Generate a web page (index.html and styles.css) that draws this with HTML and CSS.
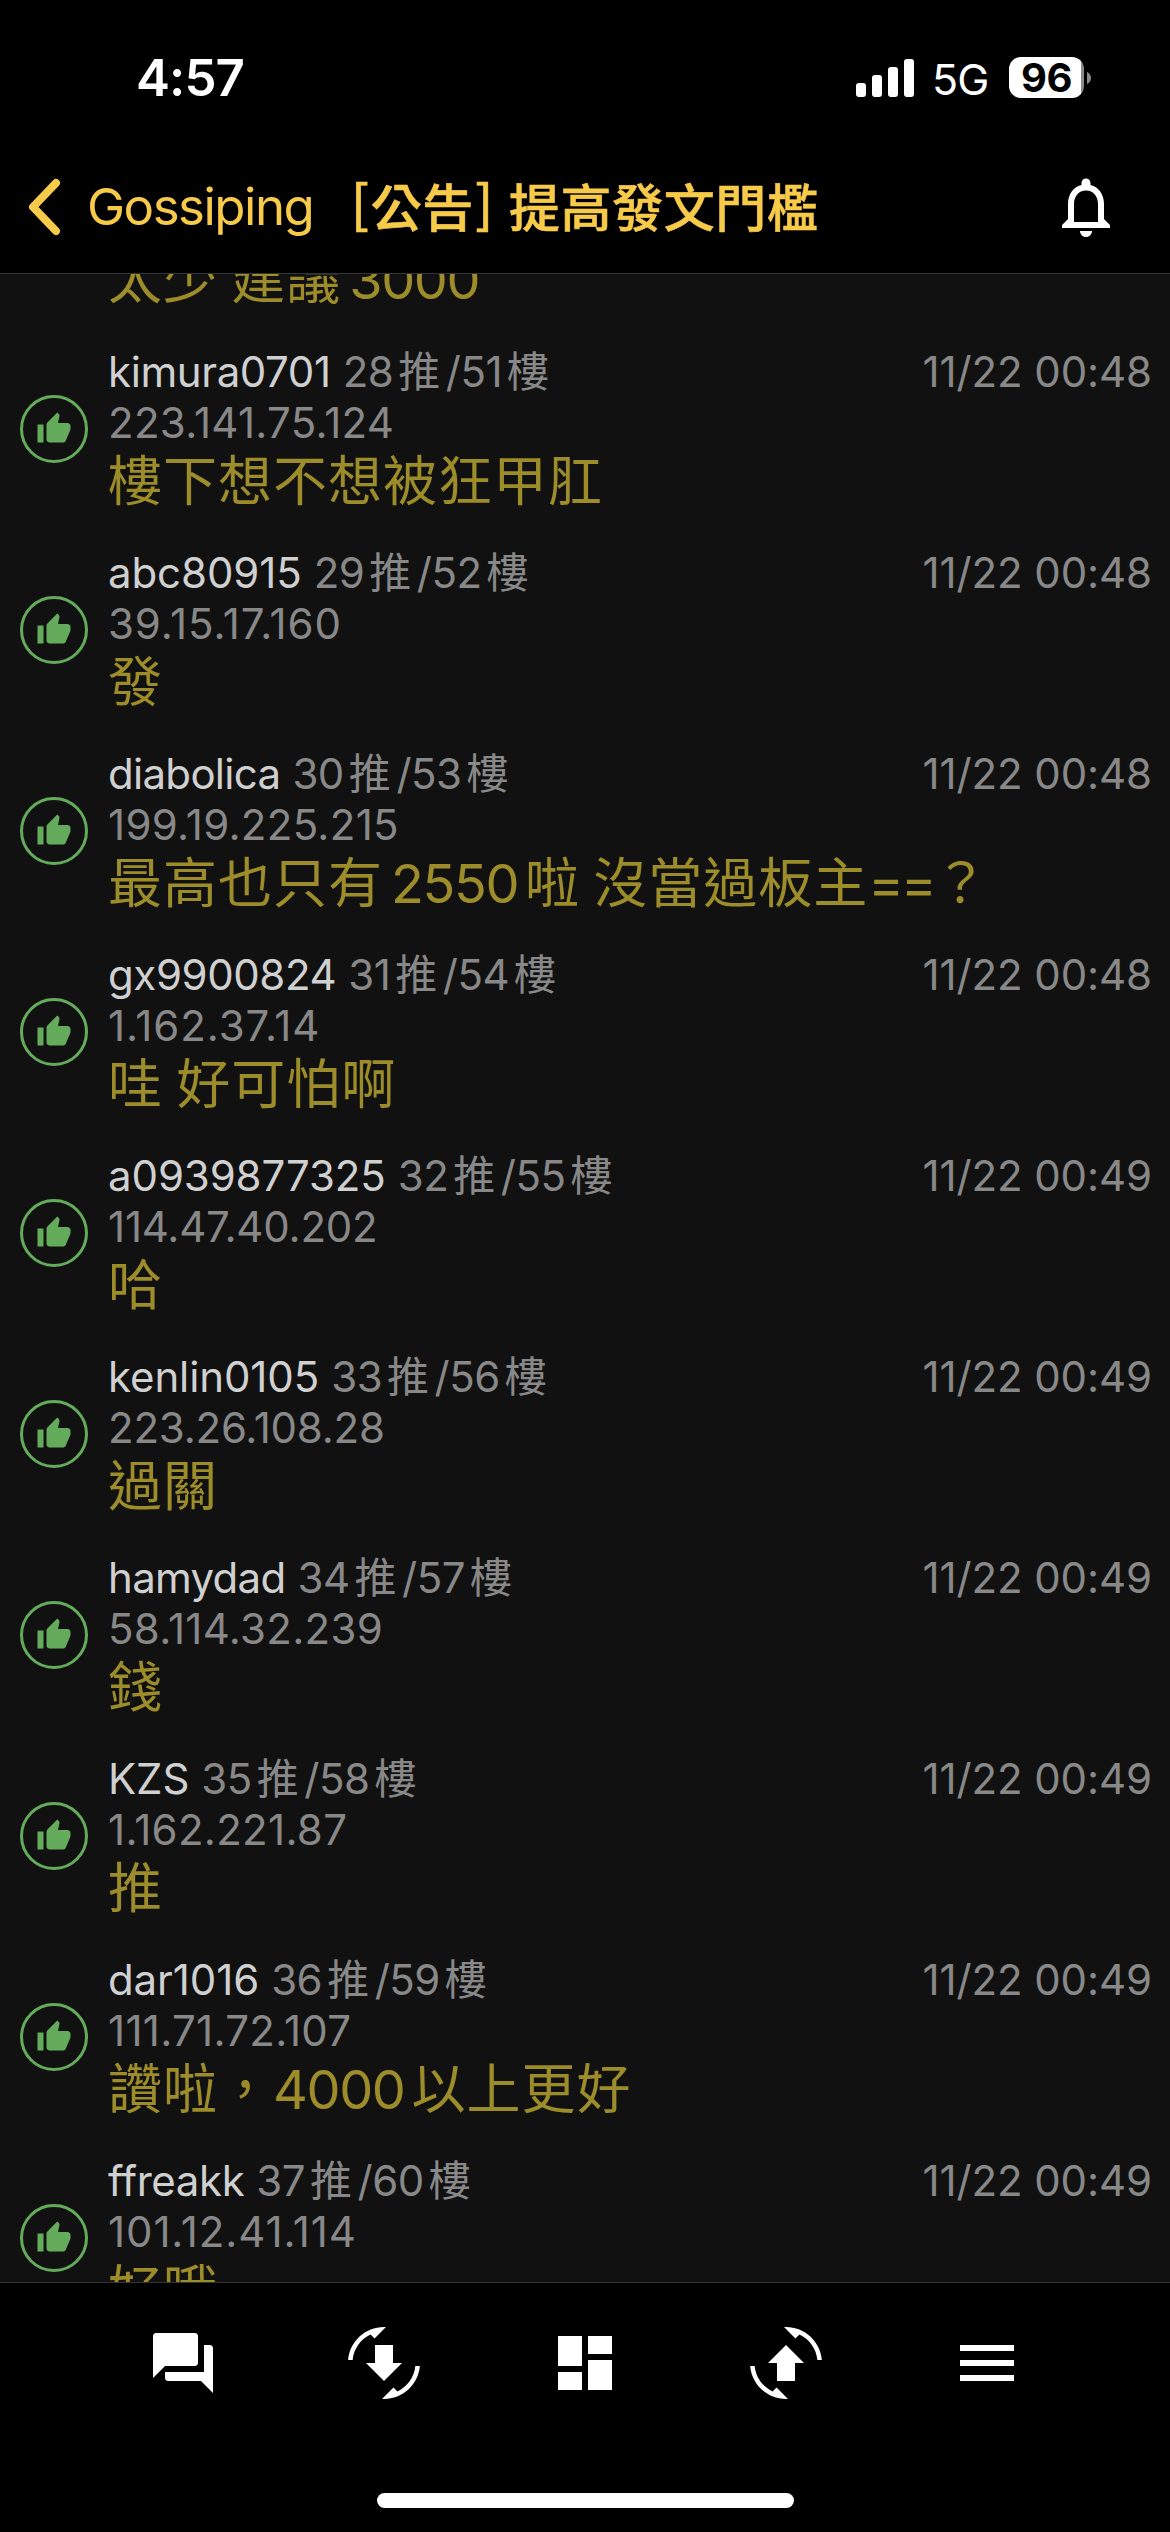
FILE: index.html
```html
<!DOCTYPE html>
<html lang="zh-Hant">
<head>
<meta charset="utf-8">
<title>[公告] 提高發文門檻</title>
<link rel="stylesheet" href="styles.css">
</head>
<body>
<svg class="defs" aria-hidden="true">
  <symbol id="thumb" viewBox="0 0 24 24"><path d="M1 21h4V9H1v12zm22-11c0-1.1-.9-2-2-2h-6.31l.95-4.57.03-.32c0-.41-.17-.79-.44-1.06L14.17 1 7.59 7.59C7.22 7.95 7 8.45 7 9v10c0 1.1.9 2 2 2h9c.83 0 1.54-.5 1.84-1.22l3.02-7.05c.09-.23.14-.47.14-.73v-2z"/></symbol>
</svg>
<div class="screen">
  <header class="top">
    <div class="status">
      <span class="clock">4:57</span>
      <div class="indicators">
        <svg class="signal" viewBox="0 0 58 40"><rect x="0" y="26" width="10" height="14" rx="3"/><rect x="16" y="18" width="10" height="22" rx="3"/><rect x="32" y="10" width="10" height="30" rx="3"/><rect x="48" y="2" width="10" height="38" rx="3"/></svg>
        <span class="network">5G</span>
        <div class="battery">96</div>
        <svg class="battery-cap" viewBox="0 0 4 12"><path d="M0 0c2.500 1 4 3.500 4 6s-1.500 5-4 6z"/></svg>
      </div>
    </div>
    <nav class="nav">
      <svg class="chevron" viewBox="0 0 40 64"><path d="M33 8 10 32l23 24"/></svg>
      <span class="back">Gossiping</span>
      <h1 class="title"><span class="bracket">[</span>公告<span class="bracket">]</span> 提高發文門檻</h1>
      <svg class="bell" viewBox="0 0 24 24"><path d="M12 22c1.100 0 2-.9 2-2h-4c0 1.100.890 2 2 2zm6-6v-5c0-3.070-1.640-5.640-4.500-6.320V4c0-.83-.67-1.500-1.500-1.500s-1.500.670-1.500 1.500v.68C7.630 5.360 6 7.920 6 11v5l-2 2v1h16v-1l-2-2zm-2 1H8v-6c0-2.480 1.510-4.500 4-4.500s4 2.020 4 4.500v6z"/></svg>
    </nav>
  </header>

  <main class="list">
    <article class="row partial">
      <p class="text">太少 建議<span class="num last">3000</span></p>
    </article>
    <article class="row">
      <div class="badge"><svg><use href="#thumb"/></svg></div>
      <div class="body">
        <div class="head"><span class="user">kimura0701</span><span class="floor">28<i>推</i>/51<i>樓</i></span><time>11/22 00:48</time></div>
        <div class="ip">223.141.75.124</div>
        <p class="text">樓下想不想被狂甲肛</p>
      </div>
    </article>
    <article class="row">
      <div class="badge"><svg><use href="#thumb"/></svg></div>
      <div class="body">
        <div class="head"><span class="user digits">abc80915</span><span class="floor">29<i>推</i>/52<i>樓</i></span><time>11/22 00:48</time></div>
        <div class="ip loose">39.15.17.160</div>
        <p class="text">發</p>
      </div>
    </article>
    <article class="row">
      <div class="badge"><svg><use href="#thumb"/></svg></div>
      <div class="body">
        <div class="head"><span class="user letters">diabolica</span><span class="floor">30<i>推</i>/53<i>樓</i></span><time>11/22 00:48</time></div>
        <div class="ip">199.19.225.215</div>
        <p class="text">最高也只有<span class="num">2550</span>啦 沒當過板主<span class="sign">==</span>？</p>
      </div>
    </article>
    <article class="row">
      <div class="badge"><svg><use href="#thumb"/></svg></div>
      <div class="body">
        <div class="head"><span class="user">gx9900824</span><span class="floor">31<i>推</i>/54<i>樓</i></span><time>11/22 00:48</time></div>
        <div class="ip loose">1.162.37.14</div>
        <p class="text">哇 好可怕啊</p>
      </div>
    </article>
    <article class="row">
      <div class="badge"><svg><use href="#thumb"/></svg></div>
      <div class="body">
        <div class="head"><span class="user digits">a0939877325</span><span class="floor">32<i>推</i>/55<i>樓</i></span><time>11/22 00:49</time></div>
        <div class="ip tight">114.47.40.202</div>
        <p class="text">哈</p>
      </div>
    </article>
    <article class="row">
      <div class="badge"><svg><use href="#thumb"/></svg></div>
      <div class="body">
        <div class="head"><span class="user digits">kenlin0105</span><span class="floor">33<i>推</i>/56<i>樓</i></span><time>11/22 00:49</time></div>
        <div class="ip tight">223.26.108.28</div>
        <p class="text">過關</p>
      </div>
    </article>
    <article class="row">
      <div class="badge"><svg><use href="#thumb"/></svg></div>
      <div class="body">
        <div class="head"><span class="user letters">hamydad</span><span class="floor">34<i>推</i>/57<i>樓</i></span><time>11/22 00:49</time></div>
        <div class="ip">58.114.32.239</div>
        <p class="text">錢</p>
      </div>
    </article>
    <article class="row">
      <div class="badge"><svg><use href="#thumb"/></svg></div>
      <div class="body">
        <div class="head"><span class="user digits">KZS</span><span class="floor">35<i>推</i>/58<i>樓</i></span><time>11/22 00:49</time></div>
        <div class="ip">1.162.221.87</div>
        <p class="text">推</p>
      </div>
    </article>
    <article class="row">
      <div class="badge"><svg><use href="#thumb"/></svg></div>
      <div class="body">
        <div class="head"><span class="user digits">dar1016</span><span class="floor">36<i>推</i>/59<i>樓</i></span><time>11/22 00:49</time></div>
        <div class="ip">111.71.72.107</div>
        <p class="text">讚啦，<span class="num after-comma">4000</span>以上更好</p>
      </div>
    </article>
    <article class="row">
      <div class="badge"><svg><use href="#thumb"/></svg></div>
      <div class="body">
        <div class="head"><span class="user">ffreakk</span><span class="floor">37<i>推</i>/60<i>樓</i></span><time>11/22 00:49</time></div>
        <div class="ip loose">101.12.41.114</div>
        <p class="text">好哦</p>
      </div>
    </article>
  </main>

  <footer class="bottom">
    <div class="tools">
      <svg viewBox="0 0 24 24"><path d="M21 6h-2v9H6v2c0 .55.450 1 1 1h11l4 4V7c0-.55-.45-1-1-1zm-4 6V3c0-.55-.45-1-1-1H3c-.55 0-1 .45-1 1v14l4-4h10c.550 0 1-.45 1-1z"/></svg>
      <svg viewBox="0 0 24 24"><path transform="matrix(-1 0 0 1 24 0)" d="M16.480 2.520c3.270 1.550 5.610 4.720 5.970 8.480h1.500C23.440 4.840 18.290 0 12 0l-.66.030 3.810 3.810 1.330-1.320zM7.520 21.480C4.250 19.940 1.910 16.760 1.550 13H.05C.560 19.160 5.710 24 12 24l.66-.03-3.810-3.810-1.330 1.320z"/><path d="M9 6h6v6h3l-6 6-6-6h3z"/></svg>
      <svg viewBox="0 0 24 24"><path d="M3 13h8V3H3v10zm0 8h8v-6H3v6zm10 0h8V11h-8v10zm0-18v6h8V3h-8z"/></svg>
      <svg viewBox="0 0 24 24"><path d="M16.480 2.520c3.270 1.550 5.610 4.720 5.970 8.480h1.500C23.440 4.840 18.290 0 12 0l-.66.030 3.810 3.810 1.330-1.320zM7.520 21.480C4.250 19.940 1.910 16.760 1.550 13H.05C.560 19.160 5.710 24 12 24l.66-.03-3.810-3.810-1.330 1.320z"/><path d="M9 18h6v-6h3l-6-6-6 6h3z"/></svg>
      <svg viewBox="0 0 24 24"><path d="M3 18h18v-2H3v2zm0-5h18v-2H3v2zm0-7v2h18V6H3z"/></svg>
    </div>
    <div class="home"></div>
  </footer>
</div>
</body>
</html>
```
FILE: styles.css
```css
* { box-sizing: border-box; margin: 0; padding: 0; }

body {
  background: #000;
  color: #fff;
  font-family: Inter, "Noto Sans CJK TC", sans-serif;
}

.defs { display: none; }

svg { display: block; fill: currentColor; }

.screen {
  width: 1170px;
  height: 2532px;
  display: flex;
  flex-direction: column;
  overflow: hidden;
}

/* status bar and navigation */
.top { height: 274px; border-bottom: 1px solid #333335; flex: none; }

.status {
  height: 147px;
  padding: 8px 79px 0 136px;
  display: flex;
  align-items: center;
  justify-content: space-between;
}

.clock { font-size: 51px; font-weight: 600; line-height: 62px; letter-spacing: -0.9px; }

.indicators { display: flex; align-items: center; }

.signal { width: 58px; height: 40px; margin-top: -2px; }

.network {
  margin-left: 18px;
  padding-top: 3px;
  width: 77px;
  font-size: 43px;
  line-height: 50px;
  letter-spacing: -1px;
}

.battery {
  width: 75px;
  height: 41px;
  border-radius: 12px;
  background: linear-gradient(90deg, #fff 72px, #8a8a8a 72px);
  color: #000;
  font-size: 40px;
  font-weight: 700;
  line-height: 41px;
  letter-spacing: -0.5px;
  text-align: center;
}

.battery-cap { width: 4px; height: 12px; margin-left: 3px; color: #8a8a8a; }

.nav {
  height: 126px;
  padding: 0 48px 7px 23px;
  display: flex;
  align-items: center;
  color: #f7ca4a;
}

.chevron {
  width: 40px;
  height: 64px;
  fill: none;
  stroke: currentColor;
  stroke-width: 8;
  stroke-linecap: round;
  stroke-linejoin: round;
}

.back { width: 263px; margin-left: 24px; font-size: 51px; line-height: 62px; letter-spacing: -1.5px; }

.title {
  padding-top: 4px;
  font-size: 51px;
  line-height: 62px;
  font-weight: 500;
  -webkit-text-stroke: 0.6px currentColor;
  letter-spacing: 0.6px;
  white-space: nowrap;
}

.bracket {
  font-family: "Noto Sans CJK TC", sans-serif;
  line-height: 0;
  vertical-align: 4px;
  margin: 0 1px;
}

.bell { width: 72px; height: 72px; margin-left: auto; color: #fff; }

/* comments */
.list { flex: 1; min-height: 0; overflow: hidden; background: #111; }

.row {
  height: 201px;
  padding: 17px 18px 0 20px;
  display: flex;
}

.row.partial {
  height: 55px;
  padding: 0 0 17px 108px;
  align-items: flex-end;
}

.badge {
  width: 68px;
  height: 68px;
  margin-top: 49px;
  flex: none;
  border: 3px solid #64ac5b;
  border-radius: 50%;
  color: #64ac5b;
}

.badge svg { width: 36px; height: 36px; margin: 13px 0 0 13px; }

.body { flex: 1; margin-left: 20px; }

.head { display: flex; font-size: 42px; line-height: 51px; white-space: pre; }

.user { color: #d0d0d0; letter-spacing: -0.4px; }
.user.digits { letter-spacing: -0.1px; }
.user.letters { letter-spacing: -0.7px; }

.floor { margin-left: 12px; color: #888; letter-spacing: -0.5px; }

.floor i { font-style: normal; margin: 0 6px 0 5px; }

time { margin-left: auto; color: #888; letter-spacing: -0.1px; }

.ip { color: #888; font-size: 42px; line-height: 52px; letter-spacing: 0.3px; }
.ip.loose { letter-spacing: 0.9px; }
.ip.tight { letter-spacing: -0.2px; }

.text {
  color: #9c8c2a;
  font-size: 54px;
  line-height: 65px;
  letter-spacing: 1px;
  word-spacing: -3px;
  white-space: nowrap;
}

.num { margin: 0 7px 0 8px; letter-spacing: -1.4px; }
.num.last { margin-right: 0; }
.num.after-comma { margin-left: 0; }
.sign { letter-spacing: -3px; }

/* toolbar */
.bottom {
  height: 250px;
  border-top: 1px solid #333335;
  flex: none;
  display: flex;
  flex-direction: column;
  align-items: center;
  justify-content: space-between;
  padding: 44px 0 24px;
}

.tools { display: flex; gap: 129px; }

.tools svg { width: 72px; height: 72px; }

.home { width: 417px; height: 15px; border-radius: 8px; background: #fff; }
```
